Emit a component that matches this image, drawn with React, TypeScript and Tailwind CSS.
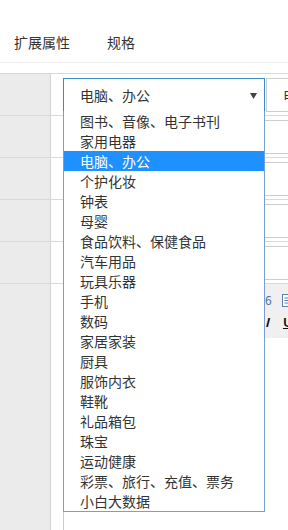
import React from "react";

const items = [
  "图书、音像、电子书刊",
  "家用电器",
  "电脑、办公",
  "个护化妆",
  "钟表",
  "母婴",
  "食品饮料、保健食品",
  "汽车用品",
  "玩具乐器",
  "手机",
  "数码",
  "家居家装",
  "厨具",
  "服饰内衣",
  "鞋靴",
  "礼品箱包",
  "珠宝",
  "运动健康",
  "彩票、旅行、充值、票务",
  "小白大数据",
];

function InputRow() {
  return (
    <div className="flex h-[42px] border-b border-[#d9d9d9]">
      <div className="w-[51px] shrink-0 bg-[#ebebeb] border-r border-[#d4d4d4]" />
      <div className="flex items-center pl-[12px]">
        <div className="w-[320px] h-[34px] border border-[#cccccc] bg-white" />
      </div>
    </div>
  );
}

export default function App() {
  return (
    <div
      className="relative w-[288px] h-[530px] overflow-hidden bg-white text-[#333] text-[14px] flex flex-col"
      style={{ fontFamily: '"Noto Sans CJK SC", "Noto Sans", sans-serif' }}
    >
      {/* tabs */}
      <div className="h-[63px] shrink-0 flex items-end pb-[10px] border-b border-[#eeeeee]">
        <span className="pl-[14px] leading-[20px]">扩展属性</span>
        <span className="pl-[37px] leading-[20px]">规格</span>
      </div>
      <div className="h-[10px] shrink-0" />
      {/* form */}
      <div className="flex flex-col flex-1 border-t border-[#d9d9d9]">
        <div className="flex h-[42px] border-b border-[#d9d9d9]">
          <div className="w-[51px] shrink-0 bg-[#ebebeb] border-r border-[#d4d4d4]" />
          <div className="flex items-center pl-[12px]">
            <div className="relative w-[202px] h-[34px] shrink-0 border border-[#3b8bc2] bg-white flex items-center pl-[16px] leading-[20px]">
              电脑、办公
              <svg className="absolute right-[7px] top-[14px]" width="7" height="6" viewBox="0 0 7 6">
                <path d="M0 0 H7 L3.5 6 Z" fill="#444" />
              </svg>
            </div>
            <div className="w-[200px] h-[34px] shrink-0 ml-[1px] border border-[#cccccc] bg-white flex items-center pl-[16px] leading-[20px]">
              电脑、办公
            </div>
          </div>
        </div>
        <InputRow />
        <InputRow />
        <InputRow />
        <InputRow />
        <div className="flex flex-1">
          <div className="w-[51px] shrink-0 bg-[#ebebeb] border-r border-[#d4d4d4]" />
          <div className="pl-[12px] flex-1 flex">
            <div className="flex-1 border-l border-[#cccccc]">
              <div className="h-[54px] bg-[#f0f0f0] flex flex-col justify-center gap-[8px] pl-[201px]">
                <div className="flex items-center h-[14px]">
                  <span className="text-[12px] leading-[14px] text-[#4a6fa5]">6</span>
                  <svg width="12" height="13" viewBox="0 0 12 13" className="ml-[10px]">
                    <rect x="0.5" y="0.5" width="9" height="12" fill="#fff" stroke="#5b7fb5" />
                    <path d="M2.5 4 H7.5 M2.5 6.5 H7.5 M2.5 9 H7.5" stroke="#5b7fb5" />
                  </svg>
                </div>
                <div className="flex items-center h-[14px] font-bold text-[12px] leading-[14px] text-[#111]">
                  <span className="italic">I</span>
                  <span className="underline ml-[14px]">U</span>
                </div>
              </div>
            </div>
          </div>
        </div>
      </div>

      {/* dropdown menu overlay */}
      <div className="absolute left-[63px] top-[111px] w-[202px] border border-t-0 border-[#7b9dd6] bg-white">
        {items.map((it) => (
          <div
            key={it}
            className={
              it === "电脑、办公"
                ? "h-[20px] leading-[20px] pl-[16px] bg-[#1e90ff] text-white whitespace-nowrap"
                : "h-[20px] leading-[20px] pl-[16px] text-[#333] whitespace-nowrap"
            }
          >
            {it}
          </div>
        ))}
      </div>
    </div>
  );
}
